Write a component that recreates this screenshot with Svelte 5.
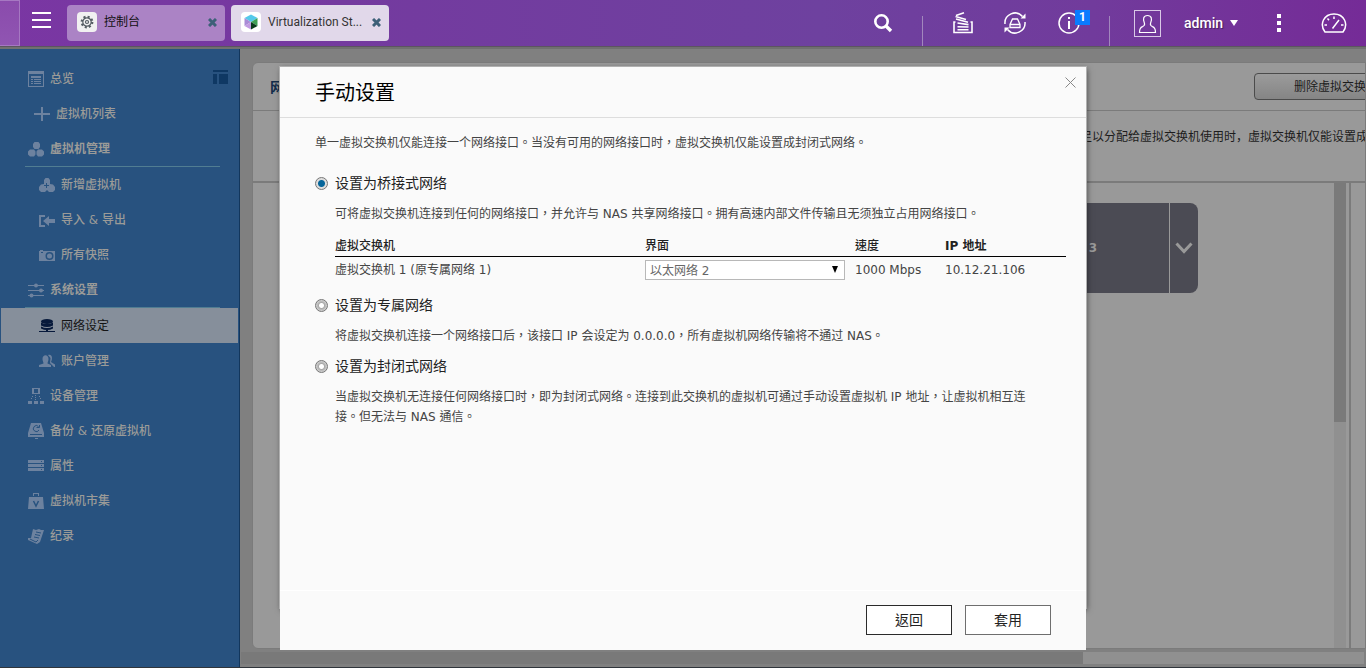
<script>
	let mode = "bridge";
	let port = "以太网络 2";

	const menu = [
		{ id: "overview", label: "总览", icon: "list" },
		{ id: "vm-list", label: "虚拟机列表", icon: "plus", indent: true },
		{ id: "vm", label: "虚拟机管理", icon: "cubes", group: true },
		{ id: "vm-new", label: "新增虚拟机", icon: "addvm", sub: true },
		{ id: "import", label: "导入 & 导出", icon: "import", sub: true },
		{ id: "snapshots", label: "所有快照", icon: "camera", sub: true },
		{ id: "system", label: "系统设置", icon: "sliders", group: true },
		{ id: "network", label: "网络设定", icon: "network", sub: true, active: true },
		{ id: "accounts", label: "账户管理", icon: "users", sub: true },
		{ id: "devices", label: "设备管理", icon: "devices" },
		{ id: "backup", label: "备份 & 还原虚拟机", icon: "backup" },
		{ id: "properties", label: "属性", icon: "server" },
		{ id: "market", label: "虚拟机市集", icon: "bag" },
		{ id: "logs", label: "纪录", icon: "log" }
	];
</script>

<div class="desktop">
	<header>
		<div class="edge"></div>
		<button class="burger" aria-label="主菜单">
			<svg width="19" height="16" viewBox="0 0 19 16"><path d="M0 1h19M0 8h19M0 15h19" stroke="#fff" stroke-width="2" /></svg>
		</button>

		<div class="tab">
			<svg width="20" height="20" viewBox="0 0 20 20">
				<rect width="20" height="20" rx="4" fill="#f1f1f1" />
				<circle cx="10" cy="10" r="5.2" fill="none" stroke="#555d63" stroke-width="2.4" stroke-dasharray="2 2.08" />
				<circle cx="10" cy="10" r="4.2" fill="none" stroke="#555d63" stroke-width="1.2" />
				<circle cx="10" cy="10" r="1.5" fill="none" stroke="#555d63" stroke-width="1.2" />
			</svg>
			<span>控制台</span>
			<button class="tab-close" aria-label="关闭"><svg width="9" height="9" viewBox="0 0 9 9"><path d="M1 1l7 7M8 1l-7 7" /></svg></button>
		</div>
		<div class="tab current">
			<svg width="20" height="20" viewBox="0 0 20 20">
				<rect width="20" height="20" rx="4" fill="#fff" />
				<path d="M3.500 6L10 2.500 16.500 6 10 10z" fill="#55c9ea" />
				<path d="M3.500 6v8L10 10z" fill="#a98bd6" />
				<path d="M3.500 14L10 10v7.500z" fill="#c29be2" />
				<path d="M16.500 6v8L10 10z" fill="#3f9f55" />
				<path d="M16.500 14L10 10v7.500z" fill="#0b3a1c" />
			</svg>
			<span>Virtualization St...</span>
			<button class="tab-close" aria-label="关闭"><svg width="9" height="9" viewBox="0 0 9 9"><path d="M1 1l7 7M8 1l-7 7" /></svg></button>
		</div>

		<div class="tools">
			<button aria-label="搜索">
				<svg width="20" height="20" viewBox="0 0 20 20" fill="none" stroke="#fff"><circle cx="8.500" cy="8.500" r="6.200" stroke-width="2.600" /><path d="M13 13l5 5" stroke-width="3.400" /></svg>
			</button>
			<i class="divider"></i>
			<button aria-label="后台任务">
				<svg width="21" height="22" viewBox="0 0 21 22" fill="none" stroke="#fff" stroke-width="1.600">
					<path d="M2.500 10H1v10.500h18V10h-1.500M4.500 17.800h11M4.500 14.800l11 .2M4.500 11l11 1.600M3 7l12 3.200M2.500 4.500l10.500 3M3 3.500L11 .8" />
				</svg>
			</button>
			<button aria-label="外接设备">
				<svg width="22" height="22" viewBox="0 0 22 22" fill="none" stroke="#fff" stroke-width="1.500">
					<path d="M1 12A10 10 0 0 1 18.500 4.500M21 10A10 10 0 0 1 3.500 17.500" />
					<path d="M21.500 1.500v5h-5zM.5 20.500v-5h5z" fill="#fff" stroke="none" />
					<path d="M8.500 7h5l2.500 5.500v3H6v-3zM6 12.500h10" stroke-width="1.300" />
				</svg>
			</button>
			<button class="info" aria-label="通知">
				<svg width="22" height="22" viewBox="0 0 22 22" fill="none" stroke="#fff"><circle cx="11" cy="11" r="10" stroke-width="1.500" /><path d="M11 9v8M11 5v2" stroke-width="2" /></svg>
				<b class="badge">1</b>
			</button>
			<i class="divider"></i>
			<svg class="avatar" width="27" height="27" viewBox="0 0 27 27" fill="none" stroke="#fff">
				<rect x=".5" y=".5" width="26" height="26" stroke="#d9c9e6" />
				<path d="M10.500 13.500C8.500 9 9.500 5.500 13.500 5.500S18.500 9 16.500 13.500C16 15.500 17 16 18.500 16.600 21 17.500 21.500 19 21.500 22.500h-16C5.500 19 6 17.500 8.500 16.600 10 16 11 15.500 10.500 13.500z" stroke-width="1.200" />
			</svg>
			<button class="admin">admin <svg width="8" height="6" viewBox="0 0 8 6"><path d="M0 0h8L4 6z" fill="#fff" /></svg></button>
			<button aria-label="更多">
				<svg width="4" height="18" viewBox="0 0 4 18" fill="#fff"><path d="M0 0h4v4H0zM0 7h4v4H0zM0 14h4v4H0z" /></svg>
			</button>
			<button aria-label="仪表板">
				<svg width="26" height="20" viewBox="0 0 26 20" fill="none" stroke="#fff" stroke-width="1.500">
					<path d="M4 19C-2 11 3 1 13 1S28 11 22 19zM3.500 12H6M20 12h2.500M13 3.500V6M6.500 5.500L8 7.200M11.500 15.500L18 7" />
				</svg>
			</button>
		</div>
	</header>

	<div class="app">
		<nav>
			<button class="layout" aria-label="切换布局">
				<svg width="15" height="14" viewBox="0 0 15 14" fill="#0f3863"><path d="M0 0h15v2H0zM0 4h4v10H0zM6 4h9v10H6z" /></svg>
			</button>
			{#each menu as item}
				<a
					href="#{item.id}"
					class:indent={item.indent}
					class:group={item.group}
					class:sub={item.sub}
					class:active={item.active}
				>
					<svg width="16" height="16" viewBox="0 0 16 16" fill="currentColor">
						{#if item.icon === "list"}
							<path fill-rule="evenodd" d="M0 0h16v16H0zM1 3v12h14V3z" />
							<path d="M3 5h10v2H3zM3 8h2v1H3zM6 8h7v1H6zM3 10h2v1H3zM6 10h7v1H6zM3 12h2v1H3zM6 12h7v1H6z" />
						{:else if item.icon === "plus"}
							<path d="M7 1h2v6h7v2H9v6H7V9H0V7h7z" />
						{:else if item.icon === "cubes"}
							<path d="M6.500 1h4L12 3v3l-1.500 2h-4L5 6V3zM2 8.500h4l1.500 2v3L6 15.500H2L0 13.500v-3zM10 8.500h4l2 2v3l-2 2h-4l-1.500-2v-3z" />
						{:else if item.icon === "addvm"}
							<path fill-rule="evenodd" d="M6.500 1h3L11 3v4l3 .5 2 2.500v3l-2 2h-4l-2-2-2 2H2l-2-2v-3l2-2.500L5 7V3zM7 6v2H5v1h2v2h1V9h2V8H8V6z" />
						{:else if item.icon === "import"}
							<path d="M0 3h6v2H2v8h4v2H0zM4 9l6-5v3h6v4h-6v3z" />
						{:else if item.icon === "camera"}
							<path fill-rule="evenodd" d="M0 4h1V3h3v1h12v10H0zM10.500 5a4 4 0 1 0 0 8 4 4 0 0 0 0-8zM2 5v1h2V5z" />
							<circle cx="10.500" cy="9" r="2.500" />
						{:else if item.icon === "sliders"}
							<path d="M0 3h16v1H0zM0 8h16v1H0zM0 13h16v1H0z" />
							<circle cx="8" cy="3.500" r="2" /><circle cx="13" cy="8.500" r="2" /><circle cx="3.500" cy="13.500" r="2" />
						{:else if item.icon === "network"}
							<ellipse cx="8" cy="3.500" rx="6" ry="2.500" />
							<path d="M2 4.500q6 3 12 0v3q-6 3-12 0zM2 8.500q6 3 12 0v2q-6 3-12 0zM7 12h2v1h7v1H0v-1h7z" />
						{:else if item.icon === "users"}
							<path d="M3.500 6c0-5 6-5 6 0 0 2-1 3-1 4.500L12 12v2H0v-2l4.500-1.500C4.500 9 3.500 8 3.500 6z" />
							<path d="M9 2c4-1.500 5 3 3 7l4 2.500V14h-1l-4-4 .5-5z" />
						{:else if item.icon === "devices"}
							<path fill-rule="evenodd" d="M4 0h8v6H4zM6 1v4h4V1z" />
							<path d="M0 13h4v3H0zM6 13h4v3H6zM12 13h4v3h-4zM7 7h1v1H7zM7 9h1v1H7zM7 11h1v1H7zM4 8h1v1H4zM3 10h1v1H3zM11 8h1v1h-1zM12 10h1v1h-1z" />
						{:else if item.icon === "backup"}
							<path d="M3 0h10l3 10v4H0v-4zM7 15h3v1H7z" />
							<path d="M10.500 3.500A3 3 0 1 0 11 7M8.500 4.500h3V2M2 11.500h12" fill="none" stroke="#28527f" />
						{:else if item.icon === "server"}
							<path fill-rule="evenodd" d="M0 2h16v3H0zM0 6h16v3H0zM0 10h16v3H0zM13 3v1h1V3zM13 7v1h1V7zM13 11v1h1v-1z" />
						{:else if item.icon === "bag"}
							<path d="M1 4h14l1 12H0zM5 3V0h6v3h-1V1H6v2z" />
							<path d="M5.500 8L8 13l2.500-5" fill="none" stroke="#28527f" stroke-width="1.500" />
						{:else}
							<path d="M5 1l3 1 3-1 2 1 3 0-4 12-3 2-9-4 0-2 3 0z" />
							<path d="M8 4l5 1M7 6.500l5 1M6 9l5 1M2 11l6 3 2-2" fill="none" stroke="#28527f" />
						{/if}
					</svg>
					{item.label}
				</a>
			{/each}
		</nav>

		<main>
			<section class="panel">
				<div class="panel-head">
					<h2>网络设定</h2>
					<button class="remove">删除虚拟交换机</button>
				</div>
				<p class="note">单一虚拟交换机仅能连接一个网络接口，请选择要连接到虚拟交换机的网络接口并设置虚拟交换机的连接模式。若系统当前没有可用网络接口或数量不足以分配给虚拟交换机使用时，虚拟交换机仅能设置成封闭式网络。</p>
				<div class="canvas">
					<div class="stage">
						<div class="switch">
							<strong>虚拟交换机 3</strong>
							<button aria-label="展开">
								<svg width="18" height="12" viewBox="0 0 18 12"><path d="M1.500 1.500L9 9.500l7.500-8" fill="none" stroke="#999" stroke-width="3" /></svg>
							</button>
						</div>
					</div>
					<div class="scroll"><div class="thumb"></div></div>
					<div class="aside"></div>
				</div>
			</section>
			<div class="hscroll"><div class="hthumb"></div></div>
		</main>
	</div>
	<footer></footer>

	<div class="overlay">
		<div class="dialog" role="dialog" aria-labelledby="dialog-title">
			<div class="dialog-head">
				<h1 id="dialog-title">手动设置</h1>
				<button class="close" aria-label="关闭"><svg width="11" height="11" viewBox="0 0 11 11"><path d="M.5.5l10 10M10.500.5l-10 10" stroke="#888" /></svg></button>
			</div>

			<div class="dialog-body">
				<p>单一虚拟交换机仅能连接一个网络接口。当没有可用的网络接口时，虚拟交换机仅能设置成封闭式网络。</p>

				<div class="option first">
					<label><input type="radio" name="mode" value="bridge" bind:group={mode} />设置为桥接式网络</label>
					<p>可将虚拟交换机连接到任何的网络接口，并允许与 NAS 共享网络接口。拥有高速内部文件传输且无须独立占用网络接口。</p>
					<table>
						<thead>
							<tr><th class="name">虚拟交换机</th><th class="port">界面</th><th class="speed">速度</th><th>IP 地址</th></tr>
						</thead>
						<tbody>
							<tr>
								<td>虚拟交换机 1 (原专属网络 1)</td>
								<td>
									<div class="select">
										<select aria-label="界面" bind:value={port}><option>以太网络 2</option></select>
										<svg width="6" height="7" viewBox="0 0 6 7"><path d="M0 0h6L3 7z" /></svg>
									</div>
								</td>
								<td>1000 Mbps</td>
								<td>10.12.21.106</td>
							</tr>
						</tbody>
					</table>
				</div>

				<div class="option">
					<label><input type="radio" name="mode" value="dedicated" bind:group={mode} />设置为专属网络</label>
					<p>将虚拟交换机连接一个网络接口后，该接口 IP 会设定为 0.0.0.0，所有虚拟机网络传输将不通过 NAS。</p>
				</div>

				<div class="option">
					<label><input type="radio" name="mode" value="closed" bind:group={mode} />设置为封闭式网络</label>
					<p>当虚拟交换机无连接任何网络接口时，即为封闭式网络。连接到此交换机的虚拟机可通过手动设置虚拟机 IP 地址，让虚拟机相互连接。但无法与 NAS 通信。</p>
				</div>
			</div>

			<div class="dialog-foot">
				<button class="back">返回</button>
				<button>套用</button>
			</div>
		</div>
	</div>
</div>

<style>
	:global(body) {
		margin: 0;
		background: #808080;
	}

	.desktop {
		display: flex;
		flex-direction: column;
		height: 100vh;
		overflow: hidden;
		font: 12px/20px "DejaVu Sans", "Noto Sans CJK SC", sans-serif;
	}

	h1, h2, p {
		margin: 0;
	}

	button {
		padding: 0;
		border: 0;
		background: none;
		font: inherit;
		color: inherit;
	}

	svg {
		display: block;
		flex: none;
	}

	header {
		display: flex;
		align-items: center;
		height: 46px;
		flex: none;
		background: linear-gradient(90deg, #7a36a3, #743a9f 25%, #6e419f 60%, #713b9c 80%, #752b97);
		border-bottom: 1px solid #5c5560;
		font-family: Roboto, "Noto Sans CJK SC", sans-serif;
		color: #fff;
	}

	.edge {
		width: 20px;
		align-self: stretch;
		background: linear-gradient(#8a4bac, #9055b2);
		border: 1px solid #a678c2;
		border-left: 0;
		box-sizing: border-box;
	}

	.burger {
		margin: 0 16px 6px 12px;
	}

	.tab {
		display: flex;
		align-items: center;
		width: 158px;
		height: 36px;
		padding: 0 8px 2px 10px;
		box-sizing: border-box;
		margin-right: 6px;
		border-radius: 4px;
		background: #ab83c5;
		color: #111;
	}

	.tab.current {
		background: #e1d8ea;
		color: #333;
	}

	.tab span {
		flex: 1;
		margin-left: 7px;
		white-space: nowrap;
	}

	.tab-close path {
		stroke: #3d6078;
		stroke-width: 3;
	}

	.tools {
		display: flex;
		align-items: center;
		margin-left: auto;
		padding-right: 19px;
		align-self: stretch;
	}

	.tools > button {
		margin-left: 30px;
	}

	.divider {
		width: 1px;
		height: 30px;
		margin-left: 29px;
		align-self: flex-end;
		background: #a287bd;
	}

	.tools > .info {
		position: relative;
		margin-left: 32px;
	}

	.badge {
		position: absolute;
		top: -2px;
		left: 17px;
		width: 15px;
		height: 15px;
		background: #0a7bff;
		font-size: 12px;
		line-height: 15px;
	}

	.avatar {
		margin-left: 24px;
	}

	.tools > .admin {
		display: flex;
		align-items: center;
		gap: 7px;
		margin-left: 23px;
		margin-right: 9px;
		font-size: 14px;
		font-weight: 500;
		text-shadow: 1px 1px 1px #0006;
	}

	.tools > button:last-child {
		margin-left: 40px;
	}

	.app {
		display: flex;
		flex: 1;
		min-height: 0;
		background: #808080;
		border-top: 2px solid #707070;
	}

	nav {
		position: relative;
		width: 239px;
		flex: none;
		padding-top: 12px;
		border-right: 1px solid #12365c;
		background: #28527f;
	}

	.layout {
		position: absolute;
		top: 21px;
		right: 11px;
	}

	nav a {
		display: flex;
		align-items: center;
		gap: 6px;
		height: 35px;
		padding-left: 28px;
		color: #9b9b98;
		font-weight: 500;
		text-decoration: none;
	}

	nav a svg {
		color: #6d829f;
	}

	nav a.indent {
		padding-left: 34px;
	}

	nav a.sub {
		padding-left: 39px;
	}

	nav a.group {
		margin: 0 19px 0 25px;
		padding-left: 3px;
		border-bottom: 1px solid #517d92;
		font-weight: 700;
	}

	nav a.active {
		margin: 0 1px;
		padding-left: 38px;
		background: #868f9b;
		color: #141414;
		font-weight: 400;
	}

	nav a.active svg {
		color: #07193b;
	}

	main {
		display: flex;
		flex-direction: column;
		flex: 1;
		min-width: 0;
	}

	.panel {
		display: flex;
		flex-direction: column;
		flex: 1;
		margin: 13px 0 3px 12px;
		overflow: hidden;
		border: 1px solid #7b7b7b;
		border-radius: 6px 0 0 6px;
		background: #999;
	}

	.panel-head {
		display: flex;
		align-items: center;
		justify-content: space-between;
		height: 47px;
		padding-left: 17px;
		border-bottom: 1px solid #7b7b7b;
	}

	h2 {
		color: #122c4a;
		font-size: 14px;
	}

	.remove {
		flex: none;
		height: 27px;
		margin-right: -53px;
		padding: 1px 39px 0;
		border: 1px solid #4b4b4b;
		border-radius: 4px;
		background: linear-gradient(#9b9b9b, #858585);
		color: #1c1c1c;
	}

	.note {
		height: 44px;
		padding: 16px 0 10px 35px;
		border-bottom: 2px solid #7b7b7b;
		color: #1c1c1c;
		white-space: nowrap;
	}

	.canvas {
		display: flex;
		flex: 1;
	}

	.stage {
		flex: 1;
		padding: 20px 136px 0 36px;
	}

	.switch {
		display: flex;
		height: 90px;
		overflow: hidden;
		border-radius: 8px;
		background: #4b4b54;
		color: #999;
	}

	.switch strong {
		flex: 1;
		padding-right: 72px;
		border-right: 1px solid #999;
		line-height: 90px;
		text-align: right;
	}

	.switch button {
		padding: 0 5px;
	}

	.scroll {
		width: 12px;
		background: #909090;
	}

	.thumb {
		height: 239px;
		background: #7a7a7a;
	}

	.aside {
		width: 14px;
		margin-left: 3px;
		border-left: 2px solid #7b7b7b;
	}

	.hscroll {
		height: 12px;
		margin: 0 2px 3px 1px;
		background: #909090;
	}

	.hthumb {
		width: 75%;
		height: 100%;
		background: #797979;
	}

	footer {
		height: 1px;
		flex: none;
		background: #30353b;
	}

	.overlay {
		position: fixed;
		inset: 49px 0 0;
		display: flex;
		justify-content: center;
		padding: 18px;
	}

	.dialog {
		position: relative;
		z-index: 0;
		display: flex;
		flex-direction: column;
		width: 806px;
		font-family: "DejaVu Sans", "Noto Sans CJK TC", sans-serif;
		color: #444;
	}

	/* window frame, ends part way down the button bar */
	.dialog::before {
		content: "";
		position: absolute;
		inset: 0 0 42px;
		z-index: -1;
		box-shadow: 0 0 0 1px #b0b0b0, 1px 2px 6px #0008;
	}

	.dialog-head,
	.dialog-body,
	.dialog-foot {
		background: #fafafa;
	}

	.dialog-head {
		display: flex;
		align-items: center;
		justify-content: space-between;
		height: 50px;
		padding: 0 10px 0 35px;
		border-bottom: 1px solid #ddd;
	}

	h1 {
		padding-top: 2px;
		color: #000;
		font-size: 20px;
		font-weight: 400;
	}

	.close {
		margin-bottom: 20px;
	}

	.dialog-body {
		flex: 1;
		padding: 15px 20px 0 35px;
	}

	.option {
		margin-top: 10px;
	}

	.option.first {
		margin-top: 20px;
	}

	.option p {
		max-width: 700px;
		margin: 11px 0 0 20px;
	}

	label {
		display: flex;
		align-items: center;
		gap: 7px;
		color: #222;
		font-size: 14px;
	}

	input {
		appearance: none;
		width: 13px;
		height: 13px;
		margin: 0;
		border: 1px solid #777;
		border-radius: 50%;
		background: radial-gradient(circle, #fff 0 2px, #aaa 3px, #ccc 5px);
	}

	input:checked {
		background: radial-gradient(circle, #05659a 0 3px, #ddd 4px);
	}

	table {
		width: calc(100% - 20px);
		margin: 11px 0 0 20px;
		border-collapse: collapse;
		table-layout: fixed;
	}

	th {
		height: 21px;
		padding: 0;
		border-bottom: 1px solid #000;
		color: #222;
		font-weight: 500;
		text-align: left;
	}

	th:last-child {
		font-weight: 700;
	}

	td {
		height: 25px;
		padding: 3px 0 0;
		vertical-align: top;
	}

	.name {
		width: 310px;
	}

	.port {
		width: 210px;
	}

	.speed {
		width: 90px;
	}

	.select {
		position: relative;
		width: 200px;
	}

	.select svg {
		position: absolute;
		top: 6px;
		right: 7px;
		pointer-events: none;
	}

	select {
		display: block;
		appearance: none;
		width: 100%;
		height: 20px;
		padding: 0 4px;
		border: 1px solid #b8b8b8;
		border-radius: 0;
		background: #fff;
		color: #666;
		font: inherit;
	}

	.dialog-foot {
		display: flex;
		justify-content: flex-end;
		gap: 13px;
		padding: 14px 35px 15px;
		border-top: 1px solid #fff;
	}

	.dialog-foot button {
		width: 86px;
		height: 30px;
		border: 1px solid #6e6e6e;
		background: #fff;
		color: #222;
		font-size: 14px;
	}

	.dialog-foot .back {
		border-color: #2b2b2b;
	}
</style>
